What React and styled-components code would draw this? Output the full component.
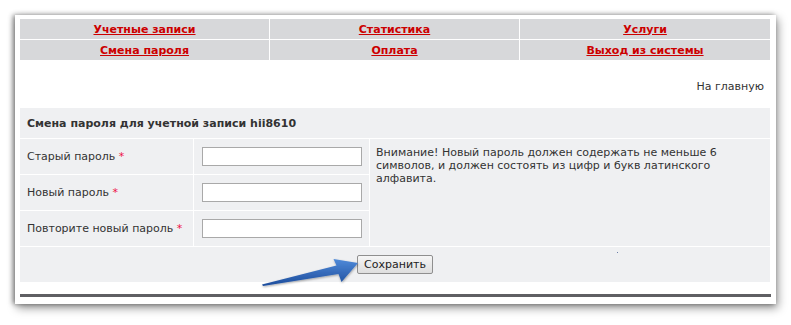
import React from "react";
import styled, { createGlobalStyle } from "styled-components";

const GlobalStyle = createGlobalStyle`
  html, body {
    margin: 0;
    padding: 0;
    background: #ffffff;
  }
  body {
    font-family: "DejaVu Sans", Verdana, sans-serif;
    font-size: 11px;
    color: #333333;
  }
`;

const Page = styled.div`
  padding: 15px 0 0 15px;
  width: 791px;
  height: 325px;
  box-sizing: border-box;
`;

const Panel = styled.div`
  position: relative;
  width: 761px;
  box-sizing: border-box;
  padding: 3px 5px 7px 5px;
  background: #fff;
  box-shadow: -2px 0 5px rgba(0, 0, 0, 0.45), 2px 4px 9px rgba(0, 0, 0, 0.4);
`;

const Nav = styled.div`
  display: grid;
  grid-template-columns: 249px 249px 250px;
  grid-auto-rows: 20px;
  gap: 1px;
  padding-top: 1px;
  background: #fff;
`;

const NavCell = styled.div`
  display: flex;
  align-items: center;
  justify-content: center;
  background: #d7d8da;
`;

const NavLink = styled.a`
  color: #cc0000;
  font-weight: bold;
  font-size: 11px;
  text-decoration: underline;
  cursor: pointer;
`;

const HomeRow = styled.div`
  display: flex;
  justify-content: flex-end;
  align-items: center;
  height: 48px;
  padding: 4px 7px 0 0;
  box-sizing: border-box;
`;

const Form = styled.div`
  display: grid;
  grid-template-columns: 173px 175px 400px;
  grid-template-rows: 30px 35px 35px 35px 35px;
  gap: 1px;
  background: #fff;
`;

const Cell = styled.div`
  background: #eff0f2;
  display: flex;
  align-items: center;
  padding: 0 ${(p) => p.$pad || 7}px;
  box-sizing: border-box;
`;

const Header = styled(Cell)`
  grid-column: 1 / 4;
  font-weight: bold;
`;

const Note = styled(Cell)`
  grid-column: 3;
  grid-row: 2 / 5;
  align-items: flex-start;
  padding: 7px 6px;
  line-height: 13px;
`;

const Star = styled.span`
  color: #ee1144;
`;

const Input = styled.input`
  width: 160px;
  height: 19px;
  box-sizing: border-box;
  border: 1px solid #a9a9a9;
  background: #fff;
  margin: 0;
  padding: 0 3px;
`;

const ButtonRow = styled(Cell)`
  grid-column: 1 / 4;
  justify-content: center;
`;

const Button = styled.button`
  width: 76px;
  height: 19px;
  padding: 0;
  font-family: "DejaVu Sans", Verdana, sans-serif;
  font-size: 11px;
  color: #222;
  border: 1px solid #8f8f8f;
  border-radius: 2px;
  background: linear-gradient(#f6f6f6, #dedede);
`;

const Rule = styled.div`
  margin-top: 12px;
  height: 3px;
  background: #5f5f63;
`;

const Dot = styled.span`
  position: absolute;
  left: 602px;
  top: 237px;
  width: 1px;
  height: 1px;
  background: #6c7fa8;
`;

const Arrow = styled.svg`
  position: absolute;
  left: 225px;
  top: 235px;
  width: 130px;
  height: 55px;
  pointer-events: none;
`;

const navItems = [
  "Учетные записи",
  "Статистика",
  "Услуги",
  "Смена пароля",
  "Оплата",
  "Выход из системы",
];

const fields = ["Старый пароль", "Новый пароль", "Повторите новый пароль"];

export default function App() {
  return (
    <Page>
      <GlobalStyle />
      <Panel>
        <Nav>
          {navItems.map((t) => (
            <NavCell key={t}>
              <NavLink>{t}</NavLink>
            </NavCell>
          ))}
        </Nav>
        <HomeRow>На главную</HomeRow>
        <Form>
          <Header>Смена пароля для учетной записи hii8610</Header>
          {fields.map((f, i) => (
            <React.Fragment key={f}>
              <Cell style={{ gridRow: i + 2, gridColumn: 1 }}>
                {f}&nbsp;<Star>*</Star>
              </Cell>
              <Cell $pad={8} style={{ gridRow: i + 2, gridColumn: 2 }}>
                <Input type="password" />
              </Cell>
            </React.Fragment>
          ))}
          <Note>
            Внимание! Новый пароль должен содержать не меньше 6 символов, и
            должен состоять из цифр и букв латинского алфавита.
          </Note>
          <ButtonRow>
            <Button>Сохранить</Button>
          </ButtonRow>
        </Form>
        <Rule />
        <Dot />
        <Arrow viewBox="240 250 130 55">
          <defs>
            <linearGradient id="ag" x1="0" y1="0" x2="0" y2="1">
              <stop offset="0" stopColor="#4f8ad9" />
              <stop offset="1" stopColor="#1c4c9c" />
            </linearGradient>
            <filter id="as" x="-20%" y="-40%" width="140%" height="180%">
              <feDropShadow dx="0.5" dy="1" stdDeviation="0.8" floodOpacity="0.35" />
            </filter>
          </defs>
          <polygon
            filter="url(#as)"
            fill="url(#ag)"
            points="262,284.5 336.5,265.5 333.5,259 358,263 341.5,282 338.5,274 263,286"
          />
        </Arrow>
      </Panel>
    </Page>
  );
}
